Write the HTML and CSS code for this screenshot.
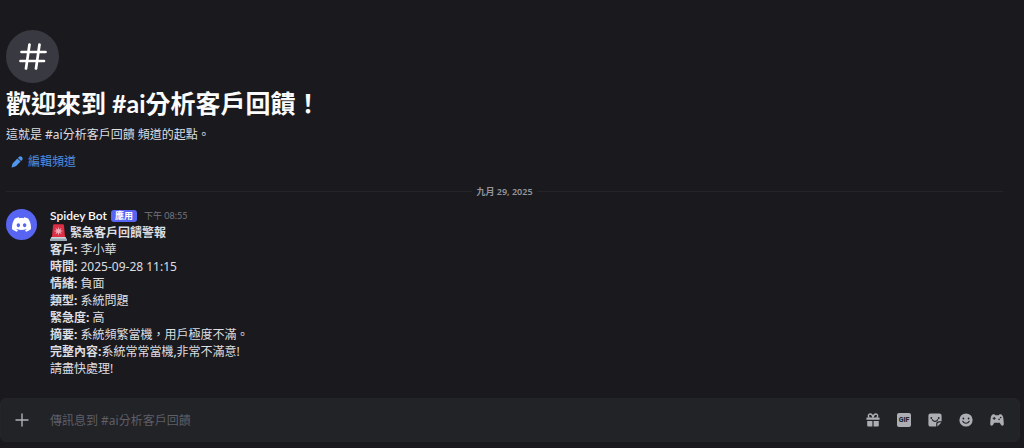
FILE: index.html
```html
<!DOCTYPE html>
<html lang="zh-Hant">
<head>
<meta charset="utf-8">
<meta name="viewport" content="width=device-width, initial-scale=1">
<title>#ai分析客戶回饋</title>
<link rel="stylesheet" href="styles.css">
</head>
<body>
<main class="chat">
  <section class="history">
    <header class="welcome">
      <div class="channel-badge">
        <svg viewBox="0 0 28 28" width="28" height="28" fill="none" stroke="#fff" stroke-width="2.700" stroke-linecap="round" aria-hidden="true"><path d="M10.500 1.500 7 25.500M20.500 1.500l-3.500 24M2.500 9h24M1.500 18H25"/></svg>
      </div>
      <h1 class="welcome-title">歡迎來到 #ai分析客戶回饋！</h1>
      <p class="welcome-text">這就是 #ai分析客戶回饋 頻道的起點。</p>
      <button class="edit-channel" type="button">
        <svg viewBox="0 0 12 12" width="12" height="12" fill="#5197ed" aria-hidden="true"><path d="M7.800 1.100a2.100 2.100 0 0 1 3.100 3.100l-.8.8-3.100-3.100zM6.400 2.500l3.100 3.100-4.400 4.400c-.3.300-.7.500-1.100.6l-2.900.8a.4.400 0 0 1-.5-.5l.8-2.900c.1-.4.300-.8.600-1.100z"/></svg>
        <span>編輯頻道</span>
      </button>
    </header>

    <div class="date-divider"><time datetime="2025-09-29">九月 29, 2025</time></div>

    <article class="message">
      <div class="avatar">
        <svg viewBox="0 0 24 24" width="19" height="19" fill="#fff" aria-hidden="true"><path d="M20.317 4.3698a19.7913 19.7913 0 00-4.8851-1.5152.0741.0741 0 00-.0785.0371c-.211.3753-.4447.8648-.6083 1.2495-1.8447-.2762-3.68-.2762-5.4868 0-.1636-.3933-.4058-.8742-.6177-1.2495a.077.077 0 00-.0785-.037 19.7363 19.7363 0 00-4.8852 1.515.0699.0699 0 00-.0321.0277C.5334 9.0458-.319 13.5799.0992 18.0578a.0824.0824 0 00.0312.0561c2.0528 1.5076 4.0413 2.4228 5.9929 3.0294a.0777.0777 0 00.0842-.0276c.4616-.6304.8731-1.2952 1.226-1.9942a.076.076 0 00-.0416-.1057c-.6528-.2476-1.2743-.5495-1.8722-.8923a.077.077 0 01-.0076-.1277c.1258-.0943.2517-.1923.3718-.2914a.0743.0743 0 01.0776-.0105c3.9278 1.7933 8.18 1.7933 12.0614 0a.0739.0739 0 01.0785.0095c.1202.099.246.1981.3728.2924a.077.077 0 01-.0066.1276 12.2986 12.2986 0 01-1.873.8914.0766.0766 0 00-.0407.1067c.3604.698.7719 1.3628 1.225 1.9932a.076.076 0 00.0842.0286c1.961-.6067 3.9495-1.5219 6.0023-3.0294a.077.077 0 00.0313-.0552c.5004-5.177-.8382-9.6739-3.5485-13.6604a.061.061 0 00-.0312-.0286zM8.02 15.3312c-1.1825 0-2.1569-1.0857-2.1569-2.419 0-1.3332.9555-2.4189 2.157-2.4189 1.2108 0 2.1757 1.0952 2.1568 2.419 0 1.3332-.9555 2.4189-2.1569 2.4189zm7.9748 0c-1.1825 0-2.1569-1.0857-2.1569-2.419 0-1.3332.9554-2.4189 2.1569-2.4189 1.2108 0 2.1757 1.0952 2.1568 2.419 0 1.3332-.946 2.4189-2.1568 2.4189Z"/></svg>
      </div>
      <div class="message-main">
        <div class="message-head">
          <span class="author">Spidey Bot</span>
          <span class="app-tag">應用</span>
          <time class="timestamp">下午 08:55</time>
        </div>
        <div class="message-body">
          <p class="alert">
            <svg viewBox="0 0 17 17" width="17" height="17" aria-hidden="true">
              <path d="M2 13 3 1.500Q3.100.3 4.300.3h8.400q1.200 0 1.300 1.200L15 13z" fill="#dd2e44"/>
              <path d="m8.500 2.500.7 2.900L11.700 3.800l-1.300 2.500 2.900.7-2.900.8 1.300 2.500-2.500-1.500-.7 2.900-.7-2.900-2.500 1.500 1.300-2.500L3.700 7l2.900-.7-1.300-2.500 2.500 1.600z" fill="#f4abba"/>
              <rect x="1" y="13" width="15" height="2.500" rx=".5" fill="#ccd6dd"/>
              <rect x="0" y="14.500" width="17" height="2.500" rx=".5" fill="#99aab5"/>
            </svg>
            <strong>緊急客戶回饋警報</strong>
          </p>
          <p><strong>客戶:</strong> 李小華</p>
          <p><strong>時間:</strong> 2025-09-28 11:15</p>
          <p><strong>情緒:</strong> 負面</p>
          <p><strong>類型:</strong> 系統問題</p>
          <p><strong>緊急度:</strong> 高</p>
          <p><strong>摘要:</strong> 系統頻繁當機，用戶極度不滿。</p>
          <p><strong>完整內容:</strong>系統常常當機,非常不滿意!</p>
          <p>請盡快處理!</p>
        </div>
      </div>
    </article>
  </section>

  <form class="composer">
    <button class="icon-button" type="button" aria-label="新增附件">
      <svg viewBox="0 0 14 14" width="14" height="14" fill="none" stroke="#b0b1b8" stroke-width="1.400" stroke-linecap="round" aria-hidden="true"><path d="M7 1v12M1 7h12"/></svg>
    </button>
    <input class="composer-input" type="text" aria-label="訊息" placeholder="傳訊息到 #ai分析客戶回饋">
    <div class="composer-tools">
      <button class="icon-button" type="button" aria-label="禮物">
        <svg viewBox="0 0 14 14" width="14" height="14" fill="#adaeb4" aria-hidden="true"><path d="M1 4.500h12a.6.6 0 0 1 .6.6v1.600H.4V5.100a.6.6 0 0 1 .6-.6zM1.200 7.900h5.200v5.700H2.200a1 1 0 0 1-1-1zM7.600 7.900h5.200v4.700a1 1 0 0 1-1 1H7.600z"/><path d="M3.200 4.700C1.600 2.800 2.400 1 4.200 1 5.800 1 6.600 2.500 7 4.600 7.400 2.500 8.200 1 9.800 1c1.800 0 2.600 1.800 1 3.700" fill="none" stroke="#adaeb4" stroke-width="1.400"/></svg>
      </button>
      <button class="icon-button" type="button" aria-label="GIF"><span class="gif-tile">GIF</span></button>
      <button class="icon-button" type="button" aria-label="貼圖">
        <svg viewBox="0 0 14 14" width="14" height="14" aria-hidden="true"><path d="M2.600.4h8.800a2.200 2.200 0 0 1 2.200 2.200v5.600H11A2.800 2.800 0 0 0 8.200 11v2.600H2.600a2.200 2.200 0 0 1-2.200-2.200V2.600A2.200 2.200 0 0 1 2.600.4zM13.400 9.400 9.400 13.400V11A1.600 1.600 0 0 1 11 9.400z" fill="#adaeb4"/><circle cx="3.300" cy="5" r=".9" fill="#222327"/><circle cx="10.700" cy="5" r=".9" fill="#222327"/><path d="M4.300 6.700c1.300 2.200 4.100 2.200 5.400 0" fill="none" stroke="#222327" stroke-width="1.200" stroke-linecap="round"/></svg>
      </button>
      <button class="icon-button" type="button" aria-label="表情符號">
        <svg viewBox="0 0 14 14" width="14" height="14" aria-hidden="true"><circle cx="7" cy="7" r="6.600" fill="#adaeb4"/><circle cx="4.400" cy="5.500" r=".9" fill="#222327"/><circle cx="9.600" cy="5.500" r=".9" fill="#222327"/><path d="M3.800 8.300c1.400 2.600 5 2.600 6.400 0" fill="none" stroke="#222327" stroke-width="1.200" stroke-linecap="round"/></svg>
      </button>
      <button class="icon-button" type="button" aria-label="應用程式">
        <svg viewBox="0 0 14 14" width="14" height="14" aria-hidden="true"><path d="M3.200 1.200c1.200-.2 1.700.5 2.200 1h3.200c.5-.5 1-1.200 2.200-1 1.600.3 2.300 2 2.600 4.300l.4 5c.1 2.300-1.700 2.900-2.700 1.400L9.700 9.800H4.300l-1.400 2.100C1.900 13.400.1 12.800.2 10.500l.4-5c.3-2.300 1-4 2.600-4.300z" fill="#adaeb4"/><path d="M4.200 3.900v3M2.700 5.400h3" stroke="#222327" stroke-width="1"/><circle cx="9.100" cy="6.400" r=".8" fill="#222327"/><circle cx="10.700" cy="4.600" r=".8" fill="#222327"/></svg>
      </button>
    </div>
  </form>
</main>
</body>
</html>
```
FILE: styles.css
```css
* {
  box-sizing: border-box;
}

body {
  margin: 0;
  background: #1a1a1e;
  color: #dddee1;
  font: 12px/17px "Noto Sans", "Noto Sans CJK TC", sans-serif;
}

h1,
p {
  margin: 0;
}

button,
input {
  margin: 0;
  padding: 0;
  border: 0;
  background: none;
  color: inherit;
  font: inherit;
}

button {
  cursor: pointer;
}

svg {
  display: block;
}

.chat {
  display: flex;
  flex-direction: column;
  min-height: 100vh;
  padding: 0 4px 6px 0;
}

.history {
  display: flex;
  flex: 1;
  flex-direction: column;
  justify-content: flex-end;
  padding: 30px 17px 21px 6px;
}

.welcome {
  display: flex;
  flex-direction: column;
  align-items: flex-start;
}

.channel-badge {
  display: grid;
  place-items: center;
  width: 53px;
  height: 53px;
  border-radius: 50%;
  background: #393a41;
}

.welcome-title {
  margin-top: 5px;
  color: #fbfbfb;
  font-family: Lato, "Noto Sans CJK TC", sans-serif;
  font-size: 25px;
  font-weight: 700;
  line-height: 30px;
}

.welcome-text {
  margin-top: 8px;
}

.edit-channel {
  display: flex;
  align-items: center;
  gap: 5px;
  margin-top: 10px;
  padding-left: 5px;
  color: #4e8fe0;
}

.date-divider {
  display: flex;
  align-items: center;
  gap: 4px;
  margin-top: 13px;
  color: #94959c;
  font-size: 9px;
  font-weight: 600;
  line-height: 17px;
}

.date-divider::before,
.date-divider::after {
  content: "";
  flex: 1;
  height: 1px;
  background: #242429;
}

.message {
  display: flex;
  gap: 13px;
  margin-top: 7px;
}

.avatar {
  display: grid;
  flex: none;
  place-items: center;
  width: 31px;
  height: 31px;
  margin-top: 2px;
  border-radius: 50%;
  background: #5865f2;
}

.message-main {
  flex: 1;
  min-width: 0;
}

.message-head {
  display: flex;
  align-items: center;
  font-family: Lato, "Noto Sans CJK TC", sans-serif;
}

.author {
  color: #fbfbfb;
  font-weight: 600;
}

.app-tag {
  margin-left: 4px;
  padding: 0 4px;
  border-radius: 3px;
  background: #5865f2;
  color: #fff;
  font-size: 9px;
  font-weight: 700;
  line-height: 12px;
}

.timestamp {
  margin-left: 7px;
  color: #75767e;
  font-size: 9px;
}

.message-body strong {
  font-weight: 700;
}

.alert {
  display: flex;
  align-items: center;
  gap: 3px;
}

.composer {
  display: flex;
  align-items: center;
  min-height: 44px;
  padding: 0 14px 0 13px;
  border: 1px solid #242529;
  border-radius: 6px;
  background: #222327;
}

.icon-button {
  display: grid;
  place-items: center;
  width: 16px;
  height: 16px;
}

.composer-input {
  flex: 1;
  min-width: 0;
  height: 24px;
  margin-left: 20px;
  outline: 0;
}

.composer-input::placeholder {
  color: #5e5f67;
  opacity: 1;
}

.composer-tools {
  display: flex;
  gap: 15px;
}

.gif-tile {
  width: 14px;
  border-radius: 2px;
  background: #adaeb4;
  color: #222327;
  font-family: Roboto, sans-serif;
  font-size: 7px;
  font-weight: 800;
  line-height: 14px;
  text-align: center;
}
```
